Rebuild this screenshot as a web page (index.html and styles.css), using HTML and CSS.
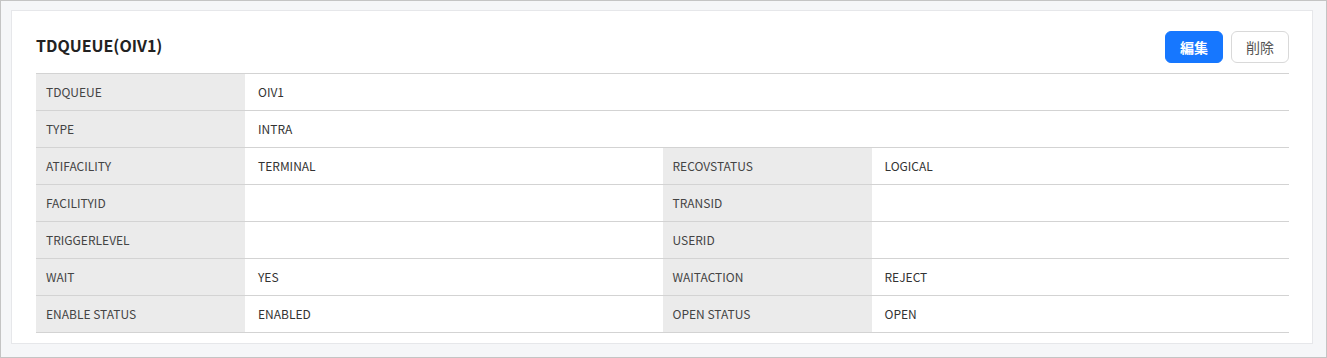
FILE: index.html
```html
<!DOCTYPE html>
<html>
  <head>
    <title>TDQUEUE(OIV1)</title>
    <meta charset="UTF-8" />
    <link rel="stylesheet" href="styles.css">
  </head>
  <body>
    <div class="frame">
      <div class="card">
        <div class="card_head">
          <h2 class="title">TDQUEUE(OIV1)</h2>
          <div class="actions">
            <button class="btn btn_primary">編集</button>
            <button class="btn">削除</button>
          </div>
        </div>
        <table class="detail">
          <colgroup>
            <col class="col_label">
            <col class="col_value">
            <col class="col_label">
            <col class="col_value">
          </colgroup>
          <tr>
            <th>TDQUEUE</th>
            <td colspan="3">OIV1</td>
          </tr>
          <tr>
            <th>TYPE</th>
            <td colspan="3">INTRA</td>
          </tr>
          <tr>
            <th>ATIFACILITY</th>
            <td>TERMINAL</td>
            <th>RECOVSTATUS</th>
            <td>LOGICAL</td>
          </tr>
          <tr>
            <th>FACILITYID</th>
            <td></td>
            <th>TRANSID</th>
            <td></td>
          </tr>
          <tr>
            <th>TRIGGERLEVEL</th>
            <td></td>
            <th>USERID</th>
            <td></td>
          </tr>
          <tr>
            <th>WAIT</th>
            <td>YES</td>
            <th>WAITACTION</th>
            <td>REJECT</td>
          </tr>
          <tr>
            <th>ENABLE STATUS</th>
            <td>ENABLED</td>
            <th>OPEN STATUS</th>
            <td>OPEN</td>
          </tr>
        </table>
      </div>
    </div>
  </body>
</html>
```
FILE: styles.css
```css
html,
body {
  margin: 0;
  height: 100%;
}
body {
  font-family: "Noto Sans CJK JP", "Noto Sans", sans-serif;
  color: #333;
}
.frame {
  box-sizing: border-box;
  height: 100%;
  border: 1px solid #c4c4c4;
  background: #f5f6f8;
  padding: 9px 13px 13px 10px;
}
.card {
  background: #fff;
  border: 1px solid #e6e7ea;
  padding: 20px 23px 10px 24px;
}
.card_head {
  display: flex;
  justify-content: space-between;
  align-items: flex-start;
  margin-bottom: 10px;
}
.title {
  margin: 0;
  font-size: 16px;
  line-height: 28px;
  font-weight: bold;
  color: #222;
}
.actions {
  display: flex;
  gap: 8px;
}
.btn {
  width: 58px;
  height: 32px;
  border: 1px solid #d9d9d9;
  border-radius: 6px;
  background: #fff;
  color: #555;
  font-family: inherit;
  font-size: 14px;
  padding: 0;
  cursor: pointer;
}
.btn_primary {
  background: #1677ff;
  border-color: #1677ff;
  color: #fff;
  font-weight: bold;
}
.detail {
  width: 100%;
  border-collapse: collapse;
  table-layout: fixed;
  font-size: 12px;
  border-top: 1px solid #d3d3d3;
}
.col_label {
  width: 209px;
}
.detail th,
.detail td {
  height: 34px;
  padding: 0 12px 2px 13px;
  border-bottom: 1px solid #d3d3d3;
  text-align: left;
  font-weight: normal;
}
.detail th {
  background: #ebebeb;
  padding-left: 10px;
  color: #444;
}
```
